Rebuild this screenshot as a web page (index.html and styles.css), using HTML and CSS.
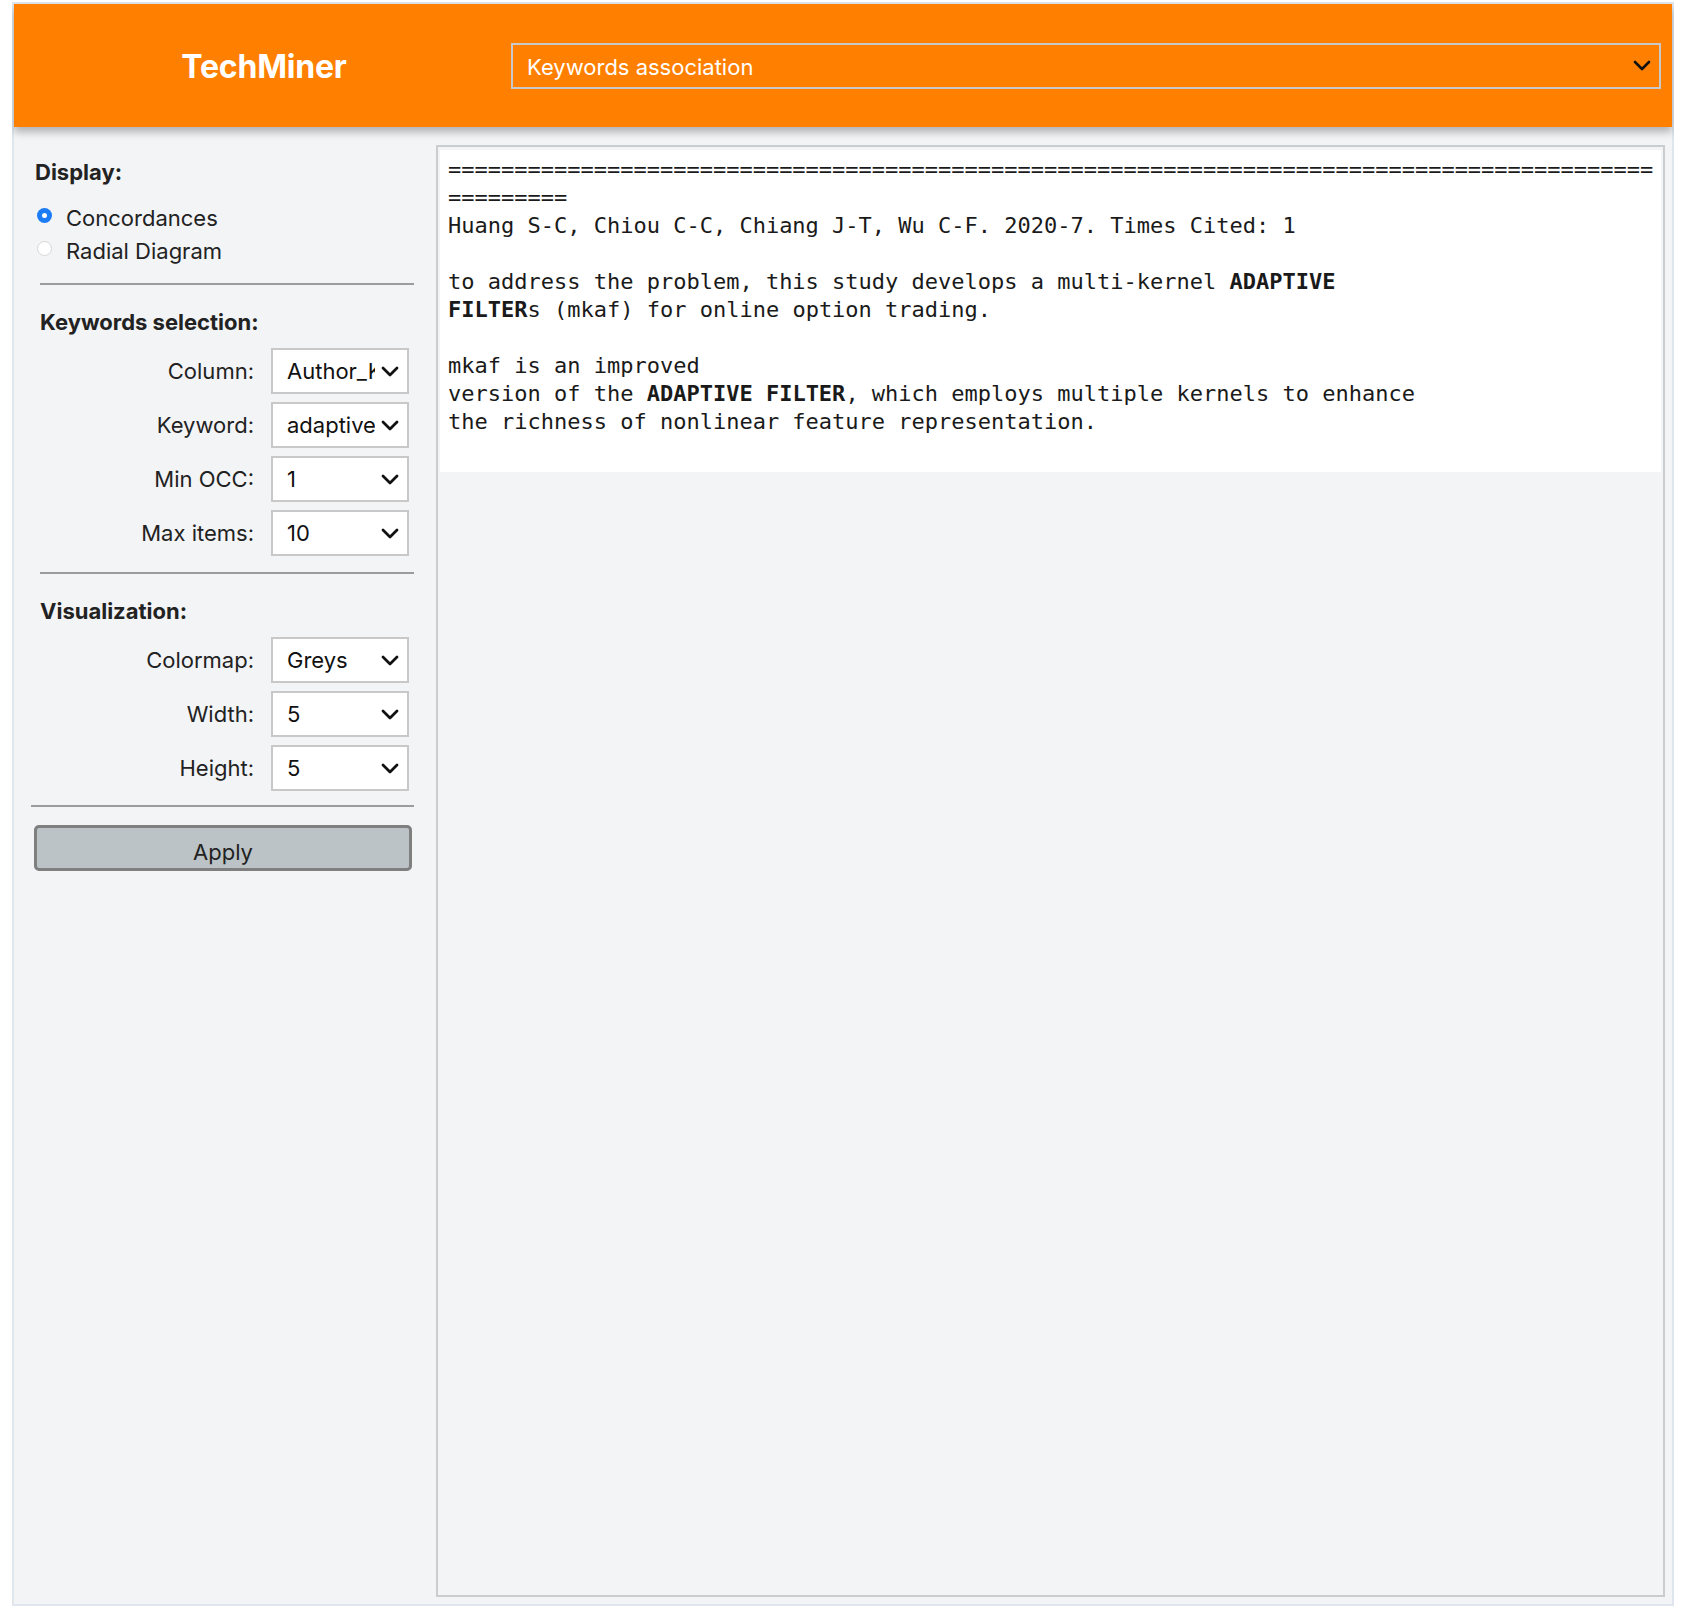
FILE: index.html
```html
<!DOCTYPE html>
<html>
<head>
<meta charset="utf-8">
<link rel="stylesheet" href="styles.css">
</head>
<body>
<div class="app">
  <header class="topbar">
    <div class="brand">TechMiner</div>
    <div class="menu">
      <span class="menu-text">Keywords association</span>
      <svg class="chev" width="18" height="11" viewBox="0 0 18 11"><path d="M2 2 L9 9 L16 2" fill="none" stroke="#111" stroke-width="2.6" stroke-linecap="round" stroke-linejoin="round"/></svg>
    </div>
  </header>
  <div class="main">
    <aside class="sidebar">
      <div class="display-title">Display:</div>
      <div class="radio-row"><span class="radio checked"></span><span>Concordances</span></div>
      <div class="radio-row"><span class="radio"></span><span>Radial Diagram</span></div>
      <div class="rule rule-a"></div>
      <div class="section-title">Keywords selection:</div>
      <div class="rows">
        <div class="row"><span class="label">Column:</span><div class="sel"><span class="sel-text">Author_Keywords</span><svg class="chev" width="18" height="11" viewBox="0 0 18 11"><path d="M2 2 L9 9 L16 2" fill="none" stroke="#111" stroke-width="2.8" stroke-linecap="round" stroke-linejoin="round"/></svg></div></div>
        <div class="row"><span class="label">Keyword:</span><div class="sel"><span class="sel-text">adaptive filter</span><svg class="chev" width="18" height="11" viewBox="0 0 18 11"><path d="M2 2 L9 9 L16 2" fill="none" stroke="#111" stroke-width="2.8" stroke-linecap="round" stroke-linejoin="round"/></svg></div></div>
        <div class="row"><span class="label">Min OCC:</span><div class="sel"><span class="sel-text">1</span><svg class="chev" width="18" height="11" viewBox="0 0 18 11"><path d="M2 2 L9 9 L16 2" fill="none" stroke="#111" stroke-width="2.8" stroke-linecap="round" stroke-linejoin="round"/></svg></div></div>
        <div class="row"><span class="label">Max items:</span><div class="sel"><span class="sel-text">10</span><svg class="chev" width="18" height="11" viewBox="0 0 18 11"><path d="M2 2 L9 9 L16 2" fill="none" stroke="#111" stroke-width="2.8" stroke-linecap="round" stroke-linejoin="round"/></svg></div></div>
      </div>
      <div class="rule rule-b"></div>
      <div class="section-title">Visualization:</div>
      <div class="rows">
        <div class="row"><span class="label">Colormap:</span><div class="sel"><span class="sel-text">Greys</span><svg class="chev" width="18" height="11" viewBox="0 0 18 11"><path d="M2 2 L9 9 L16 2" fill="none" stroke="#111" stroke-width="2.8" stroke-linecap="round" stroke-linejoin="round"/></svg></div></div>
        <div class="row"><span class="label">Width:</span><div class="sel"><span class="sel-text">5</span><svg class="chev" width="18" height="11" viewBox="0 0 18 11"><path d="M2 2 L9 9 L16 2" fill="none" stroke="#111" stroke-width="2.8" stroke-linecap="round" stroke-linejoin="round"/></svg></div></div>
        <div class="row"><span class="label">Height:</span><div class="sel"><span class="sel-text">5</span><svg class="chev" width="18" height="11" viewBox="0 0 18 11"><path d="M2 2 L9 9 L16 2" fill="none" stroke="#111" stroke-width="2.8" stroke-linecap="round" stroke-linejoin="round"/></svg></div></div>
      </div>
      <div class="rule rule-c"></div>
      <button class="apply">Apply</button>
    </aside>
    <section class="panel">
      <div class="output"><pre class="out-text">===========================================================================================
=========
Huang S-C, Chiou C-C, Chiang J-T, Wu C-F. 2020-7. Times Cited: 1

to address the problem, this study develops a multi-kernel <b>ADAPTIVE</b>
<b>FILTER</b>s (mkaf) for online option trading.

mkaf is an improved
version of the <b>ADAPTIVE FILTER</b>, which employs multiple kernels to enhance
the richness of nonlinear feature representation.</pre></div>
    </section>
  </div>
</div>
</body>
</html>
```

FILE: styles.css
```css
html, body {
  background: #ffffff;
}
body {
  margin: 2px 12px 0 12px;
  font-family: Inter, "Noto Sans", sans-serif;
  color: #222;
}
.app {
  height: 1600px;
  border: 2px solid #dfe6ed;
  background: #f3f4f6;
  display: flex;
  flex-direction: column;
}
.topbar {
  height: 123px;
  flex: none;
  background: #ff8000;
  display: flex;
  align-items: center;
  box-shadow: 0 5px 8px rgba(0, 0, 0, 0.28);
  position: relative;
  z-index: 1;
}
.brand {
  width: 497px;
  text-align: center;
  color: #fff;
  font-weight: 700;
  font-size: 32px;
  letter-spacing: -0.2px;
  padding: 2px 0 0 3px;
  box-sizing: border-box;
}
.menu {
  flex: 1;
  margin-right: 11px;
  height: 46px;
  box-sizing: border-box;
  border: 2px solid #c9c9c9;
  display: flex;
  align-items: center;
  padding: 0 8px 0 14px;
}
.menu-text {
  flex: 1;
  color: #fff;
  font-size: 22px;
  padding-top: 2px;
}
.main {
  flex: 1;
  display: flex;
  min-height: 0;
}
.sidebar {
  width: 422px;
  flex: none;
  display: flex;
  flex-direction: column;
}
.display-title {
  margin: 30px 0 0 21px;
  font-weight: 700;
  font-size: 22px;
  line-height: 30px;
}
.radio-row {
  display: flex;
  align-items: center;
  font-size: 22px;
  line-height: 33px;
  margin-left: 23px;
}
.display-title + .radio-row {
  margin-top: 15px;
}
.radio {
  width: 15px;
  height: 15px;
  box-sizing: border-box;
  border-radius: 50%;
  background: #fff;
  border: 1px solid #d6d6d6;
  margin-right: 14px;
  position: relative;
  top: -3px;
}
.radio.checked {
  background: #1b7cf6;
  border: none;
}
.radio.checked::after {
  content: "";
  position: absolute;
  left: 5px;
  top: 5px;
  width: 5px;
  height: 5px;
  border-radius: 50%;
  background: #fff;
}
.rule {
  height: 2px;
  background: #9c9c9c;
  width: 374px;
  margin-left: 26px;
}
.rule-a { margin-top: 15px; }
.rule-b { margin-top: 16px; }
.rule-c { margin-top: 14px; margin-left: 17px; width: 383px; }
.section-title {
  margin: 22px 0 0 26px;
  font-weight: 700;
  font-size: 22px;
  line-height: 30px;
}
.rows {
  margin: 11px 0 0 26px;
  display: flex;
  flex-direction: column;
  gap: 8px;
}
.row {
  display: flex;
  align-items: center;
  height: 46px;
}
.label {
  width: 214px;
  text-align: right;
  font-size: 22px;
  margin-right: 17px;
}
.sel {
  width: 138px;
  height: 46px;
  box-sizing: border-box;
  border: 2px solid #c8c8c8;
  background: #fff;
  display: flex;
  align-items: center;
  padding: 0 8px 0 14px;
}
.sel-text {
  width: 88px;
  overflow: hidden;
  white-space: nowrap;
  font-size: 22px;
  color: #111;
}
.chev {
  flex: none;
  margin-left: auto;
}
.apply {
  margin: 18px 0 0 20px;
  width: 378px;
  height: 46px;
  background: #bbc3c6;
  border: 3px solid #7f7f7f;
  border-radius: 5px;
  font-family: Inter, "Noto Sans", sans-serif;
  font-size: 22px;
  color: #222;
  padding: 7px 0 0 0;
}
.panel {
  flex: 1;
  margin: 18px 7px 7px 0;
  border: 2px solid #c9cdd0;
  padding: 3px 2px 2px 2px;
}
.output {
  background: #fff;
  padding: 6px 8px 36px 8px;
}
.out-text {
  margin: 0;
  font-family: "DejaVu Sans Mono", monospace;
  font-size: 22px;
  line-height: 28px;
  color: #1a1a1a;
  white-space: pre;
}
.out-text b {
  font-weight: 700;
}
```
